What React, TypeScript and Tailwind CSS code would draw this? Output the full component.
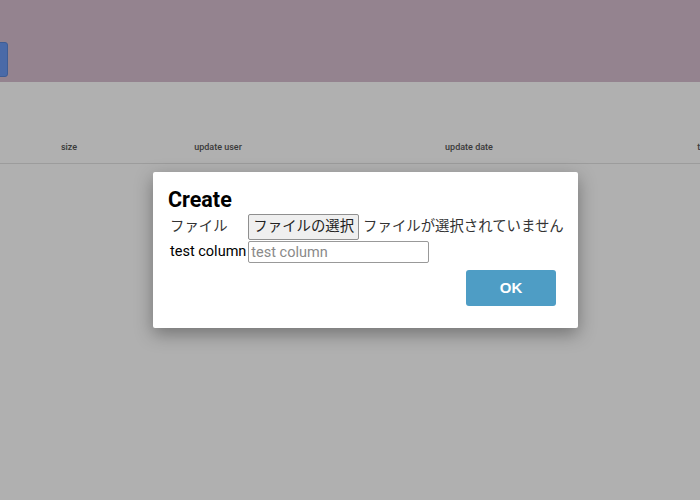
export default function App() {
  const cols = [
    { label: 'size', w: 'w-[138px]' },
    { label: 'update user', w: 'w-[160px]' },
    { label: 'update date', w: 'w-[342px]' },
    { label: 'type', w: 'w-[120px] pl-[12px]' },
  ];

  return (
    <div className="relative w-[700px] h-[500px] overflow-hidden bg-[#b0b0b0] font-['Roboto','Liberation_Sans','Noto_Sans_CJK_JP',sans-serif]">
      {/* ヘッダー */}
      <div className="h-[82px] bg-[#94838f] flex items-end pb-[5px]">
        <div className="w-[10px] h-[35px] -ml-[2px] rounded-r-[3px] bg-[#4a6aa8] border border-[#3e5d95]"></div>
      </div>

      {/* テーブルヘッダー */}
      <div className="mt-[57px] flex items-center h-[18px] border-b border-[#9c9c9c] pb-[6px] box-content text-[9px] font-medium text-[#3a3a3a] whitespace-nowrap">
        {cols.map((c) => (
          <div key={c.label} className={`${c.w} shrink-0 text-center`}>
            {c.label}
          </div>
        ))}
      </div>

      {/* ダイアログ */}
      <div className="absolute left-[153px] top-[172px] w-[425px] h-[156px] bg-white rounded-[2px] shadow-[0_6px_18px_rgba(0,0,0,0.35)] pl-[15px] pr-[22px] pt-[16px] pb-[22px] flex flex-col">
        <h2 className="text-[21.5px] leading-[24px] font-bold text-black">Create</h2>
        <div className="grid grid-cols-[auto_1fr] gap-x-[2px] gap-y-[1px] items-center mt-[2px] ml-[2px] text-[14.5px] text-[#222] whitespace-nowrap font-['Roboto','Noto_Sans_CJK_JP',sans-serif]">
          <div className="text-[#333] text-[14.4px]">ファイル</div>
          <div className="flex items-center gap-[4px] text-[14.4px]">
            <div className="h-[26px] px-[4px] flex items-center bg-[#efefef] border border-[#8f8f8f] rounded-[2px] text-[#222]">
              ファイルの選択
            </div>
            <span className="text-[#333]">ファイルが選択されていません</span>
          </div>
          <div className="text-black">test column</div>
          <div>
            <input
              placeholder="test column"
              className="w-[181px] h-[22px] px-[2px] border border-[#999] rounded-[2px] text-[14.5px] placeholder:text-[#8a8a8a] outline-none"
            />
          </div>
        </div>
        <div className="mt-auto flex justify-end">
          <button className="w-[90px] h-[36px] rounded-[3px] bg-[#4e9dc5] text-white text-[15px] font-bold font-['Liberation_Sans',sans-serif]">
            OK
          </button>
        </div>
      </div>
    </div>
  );
}
